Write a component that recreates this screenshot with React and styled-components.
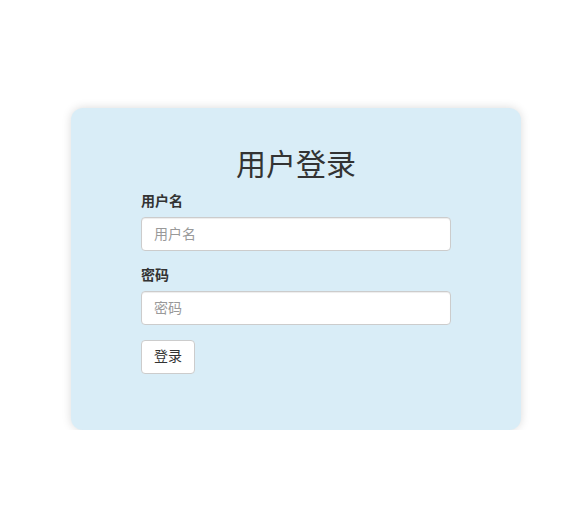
import styled, { createGlobalStyle } from "styled-components";

const GlobalStyle = createGlobalStyle`
  body {
    margin: 0;
    background: #fff;
    font-family: "Liberation Sans", "Noto Sans CJK SC", sans-serif;
    font-size: 14px;
    line-height: 1.42857;
    color: #333;
  }
  * {
    box-sizing: border-box;
  }
`

const Page = styled.div`
  display: flex;
  justify-content: center;
  padding: 108px 0 0 10px;
`

const Card = styled.div`
  width: 450px;
  background: #d9edf7;
  border-radius: 12px;
  box-shadow: 0 0 10px rgba(0, 0, 0, 0.15);
  padding: 20px 70px 56px;
`

const Title = styled.h2`
  margin: 20px 0 11px;
  font-size: 30px;
  font-weight: 400;
  line-height: 1.1;
  text-align: center;
  color: #333;
`

const FormGroup = styled.div`
  margin-bottom: 15px;
`

const Label = styled.label`
  display: block;
  margin-bottom: 5px;
  font-weight: bold;
`

const Input = styled.input`
  display: block;
  width: 100%;
  height: 34px;
  padding: 6px 12px;
  font-family: inherit;
  font-size: 14px;
  color: #555;
  background: #fff;
  border: 1px solid #ccc;
  border-radius: 4px;
  box-shadow: inset 0 1px 1px rgba(0, 0, 0, 0.075);
  outline: none;
  &::placeholder {
    color: #999;
  }
`

const Button = styled.button`
  height: 34px;
  padding: 6px 12px;
  font-family: inherit;
  font-size: 14px;
  line-height: 1.42857;
  color: #333;
  background: #fff;
  border: 1px solid #ccc;
  border-radius: 4px;
  cursor: pointer;
`

function App() {
  return (
    <Page>
      <GlobalStyle />
      <Card>
        <Title>用户登录</Title>
        <form onSubmit={e => e.preventDefault()}>
          <FormGroup>
            <Label htmlFor="username">用户名</Label>
            <Input id="username" type="text" placeholder="用户名" />
          </FormGroup>
          <FormGroup>
            <Label htmlFor="password">密码</Label>
            <Input id="password" type="password" placeholder="密码" />
          </FormGroup>
          <Button type="submit">登录</Button>
        </form>
      </Card>
    </Page>
  );
}

export default App;
